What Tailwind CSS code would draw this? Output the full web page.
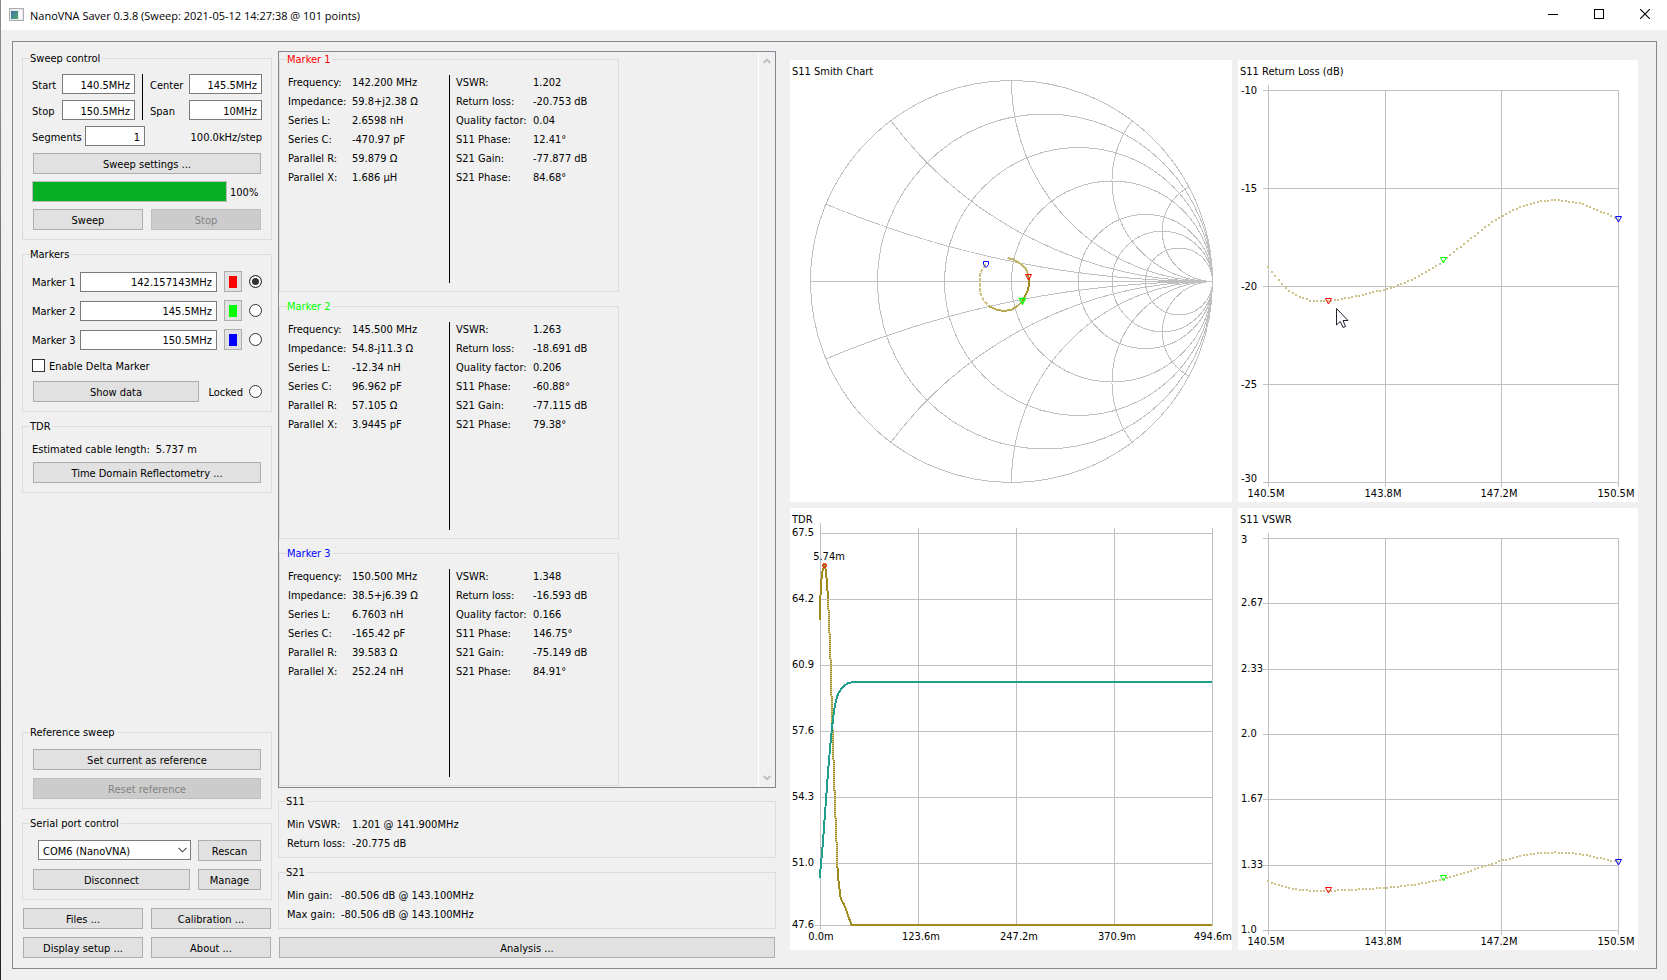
<!DOCTYPE html>
<html lang="en">
<head>
<meta charset="utf-8">
<title>NanoVNA Saver 0.3.8</title>
<script src="https://cdn.jsdelivr.net/npm/@tailwindcss/browser@4"></script>
</head>
<body class="flex min-h-screen bg-[#f0f0f0] font-['DejaVu_Sans_Condensed','DejaVu_Sans',sans-serif] text-[11px] leading-[15px] text-black">
<div class="w-px shrink-0 bg-linear-to-b from-[#8a8a8a] from-10% via-[#555555] to-[#222228]"></div>
<div class="flex min-w-0 flex-1 flex-col">

<header class="flex h-[30px] shrink-0 items-center gap-0.5 bg-white pl-2 font-['Open_Sans','Noto_Sans',sans-serif] text-[11px]">
  <svg class="mb-0.5 h-[13px] w-[15px]" viewBox="0 0 15 13" aria-hidden="true">
    <defs><linearGradient id="g" x1="0" y1="0" x2="1" y2="1"><stop offset="0" stop-color="#3f6fa8"/><stop offset="1" stop-color="#4fae6a"/></linearGradient></defs>
    <rect x="0.5" y="0.5" width="14" height="12" fill="#e8eaec" stroke="#a9adb2"/>
    <rect x="2" y="3" width="7" height="8" fill="url(#g)"/>
    <rect x="10" y="3" width="3" height="8" fill="#fafafa"/>
  </svg>
  <h1 class="ml-1 flex-1 whitespace-nowrap">NanoVNA Saver 0.3.8 (Sweep: 2021-05-12 14:27:38 @ 101 points)</h1>
  <button class="flex h-full w-11 items-center justify-center" aria-label="Minimize"><svg class="size-[10px]" viewBox="0 0 10 10"><path d="M0 4.5H10" stroke="#000"/></svg></button>
  <button class="flex h-full w-11 items-center justify-center" aria-label="Maximize"><svg class="mb-0.5 size-[10px]" viewBox="0 0 10 10"><rect x="0.5" y="0.5" width="9" height="9" fill="none" stroke="#000"/></svg></button>
  <button class="flex h-full w-11 items-center justify-center" aria-label="Close"><svg class="mb-0.5 size-[10px]" viewBox="0 0 10 10"><path d="M0 0L10 10M10 0L0 10" stroke="#000" stroke-width="1.1"/></svg></button>
</header>

<main class="mt-[11px] mr-[10px] mb-[11px] ml-[11px] flex flex-1 border border-[#828790]">

  <!-- Sweep and device controls -->
  <section class="flex w-[259px] shrink-0 flex-col gap-[7px] py-[9px] pl-[9px]">
    <fieldset class="min-w-0 border border-[#dcdcdc] px-[9px] pb-2">
      <legend class="-ml-0.5 h-[14px] pr-0.5">Sweep control</legend>
      <div class="flex flex-col gap-1.5 pt-[9px]">
        <div class="flex">
          <div class="flex w-[103px] flex-col gap-1.5">
            <div class="flex items-center justify-between"><label for="start" class="pt-0.5">Start</label><input id="start" value="140.5MHz" class="h-5 w-[73px] border border-[#7a7a7a] bg-white px-1 pt-0.5 text-right"></div>
            <div class="flex items-center justify-between"><label for="stop" class="pt-0.5">Stop</label><input id="stop" value="150.5MHz" class="h-5 w-[73px] border border-[#7a7a7a] bg-white px-1 pt-0.5 text-right"></div>
          </div>
          <div class="mx-[7px] w-px bg-black"></div>
          <div class="flex flex-1 flex-col gap-1.5">
            <div class="flex items-center justify-between"><label for="center" class="pt-0.5">Center</label><input id="center" value="145.5MHz" class="h-5 w-[73px] border border-[#7a7a7a] bg-white px-1 pt-0.5 text-right"></div>
            <div class="flex items-center justify-between"><label for="span" class="pt-0.5">Span</label><input id="span" value="10MHz" class="h-5 w-[73px] border border-[#7a7a7a] bg-white px-1 pt-0.5 text-right"></div>
          </div>
        </div>
        <div class="flex items-center"><label for="seg" class="w-[53px] pt-0.5">Segments</label><input id="seg" value="1" class="h-5 w-[60px] border border-[#7a7a7a] bg-white px-1 pt-0.5 text-right"><span class="ml-auto pt-0.5">100.0kHz/step</span></div>
        <button class="m-px h-[21px] border border-[#adadad] bg-[#e1e1e1] pt-0.5">Sweep settings ...</button>
        <div class="flex h-[21px] items-center gap-[3px]"><div class="h-[21px] w-[195px] border border-[#bcbcbc] bg-[#e6e6e6]" role="progressbar" aria-valuenow="100" aria-label="Sweep progress"><div class="h-full bg-[#06b025]" style="width:100%"></div></div><span class="pt-0.5">100%</span></div>
        <div class="grid grid-cols-2 gap-2 p-px"><button class="h-[21px] border border-[#adadad] bg-[#e1e1e1] pt-0.5">Sweep</button><button disabled class="h-[21px] border border-[#bfbfbf] bg-[#cccccc] pt-0.5 text-[#838383]">Stop</button></div>
      </div>
    </fieldset>

    <fieldset class="min-w-0 border border-[#dcdcdc] px-[9px] pb-2">
      <legend class="-ml-0.5 h-[14px] pr-0.5">Markers</legend>
      <div class="flex flex-col gap-1.5 pt-[9px]">
        <div class="flex h-[23px] items-center"><label for="m1" class="w-12 pt-0.5">Marker 1</label><input id="m1" value="142.157143MHz" class="h-5 w-[137px] border border-[#7a7a7a] bg-white px-1 pt-0.5 text-right"><button aria-label="Marker 1 colour" class="mr-[7px] ml-[7px] flex h-[21px] w-[18px] items-center justify-center border border-[#adadad] bg-[#e1e1e1]"><span class="h-3 w-2 bg-[#ff0000]"></span></button><input type="radio" name="mk" checked aria-label="Select marker 1" class="size-[13px] appearance-none rounded-full border border-[#333333] bg-white checked:bg-[#333333] checked:shadow-[inset_0_0_0_2px_white]"></div>
        <div class="flex h-[23px] items-center"><label for="m2" class="w-12 pt-0.5">Marker 2</label><input id="m2" value="145.5MHz" class="h-5 w-[137px] border border-[#7a7a7a] bg-white px-1 pt-0.5 text-right"><button aria-label="Marker 2 colour" class="mr-[7px] ml-[7px] flex h-[21px] w-[18px] items-center justify-center border border-[#adadad] bg-[#e1e1e1]"><span class="h-3 w-2 bg-[#00ff00]"></span></button><input type="radio" name="mk" aria-label="Select marker 2" class="size-[13px] appearance-none rounded-full border border-[#333333] bg-white checked:bg-[#333333] checked:shadow-[inset_0_0_0_2px_white]"></div>
        <div class="flex h-[23px] items-center"><label for="m3" class="w-12 pt-0.5">Marker 3</label><input id="m3" value="150.5MHz" class="h-5 w-[137px] border border-[#7a7a7a] bg-white px-1 pt-0.5 text-right"><button aria-label="Marker 3 colour" class="mr-[7px] ml-[7px] flex h-[21px] w-[18px] items-center justify-center border border-[#adadad] bg-[#e1e1e1]"><span class="h-3 w-2 bg-[#0000ff]"></span></button><input type="radio" name="mk" aria-label="Select marker 3" class="size-[13px] appearance-none rounded-full border border-[#333333] bg-white checked:bg-[#333333] checked:shadow-[inset_0_0_0_2px_white]"></div>
        <label class="flex h-[17px] items-center gap-1"><input type="checkbox" class="size-[13px] appearance-none border border-[#333333] bg-white checked:bg-[#333333]"><span class="pt-0.5">Enable Delta Marker</span></label>
        <div class="flex h-[23px] items-center pl-px"><button class="h-[21px] w-[166px] border border-[#adadad] bg-[#e1e1e1] pt-0.5">Show data</button><label for="locked" class="mr-1.5 ml-auto pt-0.5">Locked</label><input id="locked" type="radio" name="lock" class="size-[13px] appearance-none rounded-full border border-[#333333] bg-white checked:bg-[#333333]"></div>
      </div>
    </fieldset>

    <fieldset class="min-w-0 border border-[#dcdcdc] px-[9px] pb-2">
      <legend class="-ml-0.5 h-[14px] pr-0.5">TDR</legend>
      <div class="flex flex-col gap-1 pt-[9px]">
        <p class="flex gap-1.5"><span>Estimated cable length:</span><output>5.737 m</output></p>
        <button class="m-px h-[21px] border border-[#adadad] bg-[#e1e1e1] pt-0.5">Time Domain Reflectometry ...</button>
      </div>
    </fieldset>

    <fieldset class="mt-auto min-w-0 border border-[#dcdcdc] px-[9px] pb-2">
      <legend class="-ml-0.5 h-[14px] pr-0.5">Reference sweep</legend>
      <div class="flex flex-col gap-1.5 pt-[9px]">
        <button class="m-px h-[21px] border border-[#adadad] bg-[#e1e1e1] pt-0.5">Set current as reference</button>
        <button disabled class="m-px h-[21px] border border-[#bfbfbf] bg-[#cccccc] pt-0.5 text-[#838383]">Reset reference</button>
      </div>
    </fieldset>

    <fieldset class="min-w-0 border border-[#dcdcdc] px-[9px] pb-2">
      <legend class="-ml-0.5 h-[14px] pr-0.5">Serial port control</legend>
      <div class="flex flex-col gap-1.5 pt-[9px]">
        <div class="flex h-[23px] items-start justify-between p-px pl-1.5">
          <div class="grid">
            <select aria-label="Serial port" class="col-start-1 row-start-1 h-5 w-[153px] appearance-none border border-[#7a7a7a] bg-white pt-0.5 pl-1"><option>COM6 (NanoVNA)</option></select>
            <svg class="pointer-events-none col-start-1 row-start-1 mr-1 h-[6px] w-[9px] self-center justify-self-end" viewBox="0 0 9 6"><path d="M0.5 0.8L4.5 4.8L8.5 0.8" fill="none" stroke="#444" stroke-width="1.1"/></svg>
          </div>
          <button class="h-[21px] w-[63px] border border-[#adadad] bg-[#e1e1e1] pt-0.5">Rescan</button>
        </div>
        <div class="flex justify-between p-px"><button class="h-[21px] w-[157px] border border-[#adadad] bg-[#e1e1e1] pt-0.5">Disconnect</button><button class="h-[21px] w-[63px] border border-[#adadad] bg-[#e1e1e1] pt-0.5">Manage</button></div>
      </div>
    </fieldset>

    <div class="grid grid-cols-2 gap-2 p-px">
      <button class="h-[21px] border border-[#adadad] bg-[#e1e1e1] pt-0.5">Files ...</button>
      <button class="h-[21px] border border-[#adadad] bg-[#e1e1e1] pt-0.5">Calibration ...</button>
      <button class="h-[21px] border border-[#adadad] bg-[#e1e1e1] pt-0.5">Display setup ...</button>
      <button class="h-[21px] border border-[#adadad] bg-[#e1e1e1] pt-0.5">About ...</button>
    </div>
  </section>

  <!-- Marker readings -->
  <section class="ml-1.5 flex w-[498px] shrink-0 flex-col py-[9px]">
    <div class="flex flex-1 justify-between border border-[#828790]">
      <div class="flex w-[340px] flex-col gap-[7px] pb-px">
        <fieldset class="flex min-w-0 flex-1 border border-[#dcdcdc] px-2 pb-2">
          <legend class="-ml-px h-[14px] pr-0.5 text-[#ff0000]">Marker 1</legend>
          <dl class="mt-[9px] grid w-[161px] grid-cols-[64px_1fr] content-start gap-y-1 whitespace-nowrap"><dt>Frequency:</dt><dd>142.200 MHz</dd><dt>Impedance:</dt><dd>59.8+j2.38 Ω</dd><dt>Series L:</dt><dd>2.6598 nH</dd><dt>Series C:</dt><dd>-470.97 pF</dd><dt>Parallel R:</dt><dd>59.879 Ω</dd><dt>Parallel X:</dt><dd>1.686 µH</dd></dl>
          <div class="mt-[9px] w-px bg-black"></div>
          <dl class="mt-[9px] ml-1.5 grid grid-cols-[77px_1fr] content-start gap-y-1 whitespace-nowrap"><dt>VSWR:</dt><dd>1.202</dd><dt>Return loss:</dt><dd>-20.753 dB</dd><dt>Quality factor:</dt><dd>0.04</dd><dt>S11 Phase:</dt><dd>12.41°</dd><dt>S21 Gain:</dt><dd>-77.877 dB</dd><dt>S21 Phase:</dt><dd>84.68°</dd></dl>
        </fieldset>
        <fieldset class="flex min-w-0 flex-1 border border-[#dcdcdc] px-2 pb-2">
          <legend class="-ml-px h-[14px] pr-0.5 text-[#00ff00]">Marker 2</legend>
          <dl class="mt-[9px] grid w-[161px] grid-cols-[64px_1fr] content-start gap-y-1 whitespace-nowrap"><dt>Frequency:</dt><dd>145.500 MHz</dd><dt>Impedance:</dt><dd>54.8-j11.3 Ω</dd><dt>Series L:</dt><dd>-12.34 nH</dd><dt>Series C:</dt><dd>96.962 pF</dd><dt>Parallel R:</dt><dd>57.105 Ω</dd><dt>Parallel X:</dt><dd>3.9445 pF</dd></dl>
          <div class="mt-[9px] w-px bg-black"></div>
          <dl class="mt-[9px] ml-1.5 grid grid-cols-[77px_1fr] content-start gap-y-1 whitespace-nowrap"><dt>VSWR:</dt><dd>1.263</dd><dt>Return loss:</dt><dd>-18.691 dB</dd><dt>Quality factor:</dt><dd>0.206</dd><dt>S11 Phase:</dt><dd>-60.88°</dd><dt>S21 Gain:</dt><dd>-77.115 dB</dd><dt>S21 Phase:</dt><dd>79.38°</dd></dl>
        </fieldset>
        <fieldset class="flex min-w-0 flex-1 border border-[#dcdcdc] px-2 pb-2">
          <legend class="-ml-px h-[14px] pr-0.5 text-[#0000ff]">Marker 3</legend>
          <dl class="mt-[9px] grid w-[161px] grid-cols-[64px_1fr] content-start gap-y-1 whitespace-nowrap"><dt>Frequency:</dt><dd>150.500 MHz</dd><dt>Impedance:</dt><dd>38.5+j6.39 Ω</dd><dt>Series L:</dt><dd>6.7603 nH</dd><dt>Series C:</dt><dd>-165.42 pF</dd><dt>Parallel R:</dt><dd>39.583 Ω</dd><dt>Parallel X:</dt><dd>252.24 nH</dd></dl>
          <div class="mt-[9px] w-px bg-black"></div>
          <dl class="mt-[9px] ml-1.5 grid grid-cols-[77px_1fr] content-start gap-y-1 whitespace-nowrap"><dt>VSWR:</dt><dd>1.348</dd><dt>Return loss:</dt><dd>-16.593 dB</dd><dt>Quality factor:</dt><dd>0.166</dd><dt>S11 Phase:</dt><dd>146.75°</dd><dt>S21 Gain:</dt><dd>-75.149 dB</dd><dt>S21 Phase:</dt><dd>84.91°</dd></dl>
        </fieldset>
      </div>
      <div class="flex w-[17px] flex-col items-center justify-between border-l border-white py-1.5">
        <svg class="h-[6px] w-[8px]" viewBox="0 0 8 6"><path d="M0.7 5L4 1.7L7.3 5" fill="none" stroke="#bfbfbf" stroke-width="2"/></svg>
        <svg class="h-[6px] w-[8px]" viewBox="0 0 8 6"><path d="M0.7 1L4 4.3L7.3 1" fill="none" stroke="#bfbfbf" stroke-width="2"/></svg>
      </div>
    </div>
    <fieldset class="mt-1.5 min-w-0 border border-[#dcdcdc] px-2 pb-1.5">
      <legend class="-ml-px h-[14px] pr-0.5">S11</legend>
      <dl class="grid grid-cols-[65px_1fr] gap-y-1 pt-[9px]"><dt>Min VSWR:</dt><dd>1.201 @ 141.900MHz</dd><dt>Return loss:</dt><dd>-20.775 dB</dd></dl>
    </fieldset>
    <fieldset class="mt-[7px] min-w-0 border border-[#dcdcdc] px-2 pb-1.5">
      <legend class="-ml-px h-[14px] pr-0.5">S21</legend>
      <dl class="grid grid-cols-[54px_1fr] gap-y-1 pt-[9px]"><dt>Min gain:</dt><dd>-80.506 dB @ 143.100MHz</dd><dt>Max gain:</dt><dd>-80.506 dB @ 143.100MHz</dd></dl>
    </fieldset>
    <button class="mx-px mt-2 mb-px h-[21px] border border-[#adadad] bg-[#e1e1e1] pt-0.5">Analysis ...</button>
  </section>

  <!-- Charts -->
  <section class="grid min-w-0 flex-1 grid-cols-[442fr_400fr] gap-1.5 py-[18px] pr-[18px] pl-[14px]">
    <svg class="h-full w-full bg-white" viewBox="0 0 442 442" role="img" aria-label="S11 Smith Chart">
      <text x="2" y="15">S11 Smith Chart</text>
      <g fill="none" stroke="#c0c0c0" shape-rendering="crispEdges">
        <circle cx="221.5" cy="221.5" r="201"/>
        <circle cx="255" cy="221.5" r="167.5"/>
        <circle cx="288.5" cy="221.5" r="134"/>
        <circle cx="322" cy="221.5" r="100.5"/>
        <circle cx="355.5" cy="221.5" r="67"/>
        <circle cx="372.25" cy="221.5" r="50.25"/>
        <circle cx="389" cy="221.5" r="33.5"/>
        <path d="M20.5 221.5H422.5"/>
        <g id="react"></g>
      </g>
      <g fill="none" stroke-width="2" stroke-linejoin="round" shape-rendering="crispEdges">
        <path d="M195.500 204.500L192.500 209L189.500 215V231.500L193.500 240L198.500 246" stroke="#cdc38a" stroke-dasharray="4 1"/>
        <path d="M217.500 198L223.500 199.500L230 203.500L235.500 208.500L238 214" stroke="#c4b66b"/>
        <path d="M198.500 246L206 249.500L213 251L221 250L227.500 246L232.500 241" stroke="#b9a94e"/>
        <path d="M238 214L239 220V225.500L237.500 231L235 236L232.500 241" stroke="#a08c1e"/>
      </g>
      <path d="M193.500 201.500h5v3l-2.500 3l-2.500 -3z" fill="none" stroke="#0000ff"/>
      <path d="M235.500 214.500h6l-3 5.500z" fill="none" stroke="#ff0000"/>
      <path d="M229.500 238.500h6l-3 5.500z" fill="none" stroke="#00ff00" stroke-width="1.400"/>
    </svg>

    <svg class="h-full w-full bg-white" viewBox="0 0 400 442" role="img" aria-label="S11 Return Loss">
      <text x="2" y="15">S11 Return Loss (dB)</text>
      <path d="M25 30.500H381M25 128.500H381M25 226.500H381M25 324.500H381M25 422.500H381M30.500 25V427M147.500 30V427M263.500 30V427M380.500 30V427" stroke="#c0c0c0" shape-rendering="crispEdges"/>
      <text x="3" y="34">-10</text><text x="3" y="132">-15</text><text x="3" y="230">-20</text><text x="3" y="328">-25</text><text x="3" y="422">-30</text>
      <g text-anchor="middle"><text x="28" y="437">140.5M</text><text x="145" y="437">143.8M</text><text x="261" y="437">147.2M</text><text x="378" y="437">150.5M</text></g>
      <g id="rl" fill="#cdc38a" shape-rendering="crispEdges"></g>
      <g fill="none"><path d="M87.500 238.500h6l-3 5.500z" stroke="#ff0000"/><path d="M202.500 197.500h6l-3 5.500z" stroke="#00ff00"/><path d="M377.500 156.500h6l-3 5.500z" stroke="#0000ff"/></g>
      <path d="M98.500 248.500V265L102.300 261.500L105 267.500L107.500 266.500L105 260.500H110z" fill="#fff" stroke="#222233"/>
    </svg>

    <svg class="h-full w-full bg-white" viewBox="0 0 442 442" role="img" aria-label="TDR">
      <path d="M30 25.500H423M30 91.500H423M30 157.500H423M30 223.500H423M30 289.500H423M30 355.500H423M25 417.500H423M30.500 15V422M128.500 20V418M226.500 20V418M324.500 20V418M422.500 20V418" stroke="#c0c0c0" shape-rendering="crispEdges"/>
      <text x="2" y="15">TDR</text>
      <text x="2" y="28">67.5</text><text x="2" y="94">64.2</text><text x="2" y="160">60.9</text><text x="2" y="226">57.6</text><text x="2" y="292">54.3</text><text x="2" y="358">51.0</text><text x="2" y="420">47.6</text>
      <g text-anchor="middle"><text x="31" y="432">0.0m</text><text x="131" y="432">123.6m</text><text x="229" y="432">247.2m</text><text x="327" y="432">370.9m</text></g><text x="442" y="432" text-anchor="end">494.6m</text>
      <g fill="none" stroke-width="2" shape-rendering="crispEdges">
        <path id="imp" stroke="#a08c1e"/>
        <path id="impslope" stroke="#d3c98f" stroke-dasharray="1 1"/>
        <path id="step" stroke="#20a08c"/>
      </g>
      <circle cx="34.500" cy="57.500" r="2" fill="#a08c1e" stroke="#ff0000"/>
      <text x="39" y="52" text-anchor="middle">5.74m</text>
    </svg>

    <svg class="h-full w-full bg-white" viewBox="0 0 400 442" role="img" aria-label="S11 VSWR">
      <text x="2" y="15">S11 VSWR</text>
      <path d="M25 30.500H381M25 95.500H381M25 161.500H381M25 226.500H381M25 291.500H381M25 357.500H381M25 422.500H381M30.500 25V427M147.500 30V427M263.500 30V427M380.500 30V427" stroke="#c0c0c0" shape-rendering="crispEdges"/>
      <text x="3" y="35">3</text><text x="3" y="98">2.67</text><text x="3" y="164">2.33</text><text x="3" y="229">2.0</text><text x="3" y="294">1.67</text><text x="3" y="360">1.33</text><text x="3" y="425">1.0</text>
      <g text-anchor="middle"><text x="28" y="437">140.5M</text><text x="145" y="437">143.8M</text><text x="261" y="437">147.2M</text><text x="378" y="437">150.5M</text></g>
      <g id="vswr" fill="#cdc38a" shape-rendering="crispEdges"></g>
      <g fill="none"><path d="M87.500 379.500h6l-3 5.500z" stroke="#ff0000"/><path d="M202.500 367.500h6l-3 5.500z" stroke="#00ff00"/><path d="M377.500 351.500h6l-3 5.500z" stroke="#0000ff"/></g>
    </svg>
  </section>
</main>
</div>

<script>
const NS = 'http://www.w3.org/2000/svg';
const byId = id => document.getElementById(id);

// Constant-reactance arcs of the Smith chart, clipped at the unit circle.
const C = 221.5, R = 201;
for (const x of [0.2, 0.5, 1, 2, 4]) for (const s of [1, -1]) {
  const re = (x * x - 1) / (x * x + 1), im = 2 * x / (x * x + 1);
  const p = document.createElementNS(NS, 'path');
  p.setAttribute('d', `M${C + R} ${C}A${R / x} ${R / x} 0 0 ${s > 0 ? 1 : 0} ${C + R * re} ${C - s * R * im}`);
  byId('react').append(p);
}

// Return loss samples: sweep position 0..1050 and drop below -10 dB in 1/58.8 dB.
const rl = [[0,530],[20,556],[41,581],[62,601],[83,614],[105,623],[126,630],[147,632],[180,632],[210,627],[240,622],[270,616],[300,608],[330,602],[352,596],[380,588],[405,578],[435,567],[460,551],[490,536],[515,519],[545,493],[575,470],[605,447],[635,423],[660,404],[700,377],[725,365],[755,349],[785,340],[820,332],[860,329],[895,332],[935,338],[965,349],[990,360],[1020,372],[1050,387]];
const at = t => {
  let i = 1;
  while (i < rl.length - 1 && rl[i][0] < t) i++;
  const [a, b] = [rl[i - 1], rl[i]];
  return a[1] + (b[1] - a[1]) * (t - a[0]) / (b[0] - a[0]);
};
const dot = (g, x, y) => {
  const r = document.createElementNS(NS, 'rect');
  r.setAttribute('x', Math.round(x - 1)); r.setAttribute('y', Math.round(y - 1));
  r.setAttribute('width', 2); r.setAttribute('height', 2);
  g.append(r);
};
for (let i = 0; i <= 100; i++) {
  const v = at(i * 10.5), x = 30.4 + i * 3.5;
  dot(byId('rl'), x, 30.5 + v / 3);
  const g = Math.pow(10, -(10 + v / 58.8) / 20);
  dot(byId('vswr'), x, 422.5 - ((1 + g) / (1 - g) - 1) * 196);
}

// TDR traces, in thirds of a pixel.
const line = pts => 'M' + pts.map(([x, y]) => `${x / 3 - 10} ${y / 3 - 8}`).join('L');
const imp = [[120,360],[121,298],[123,250],[127,215],[131,203],[134,197],[137,210],[141,248],[144,298],[147,360],[150,435],[153,520],[155,608],[158,703],[161,795],[164,885],[167,965],[170,1037],[172,1097],[175,1140],[179,1172],[182,1195],[190,1210],[197,1225],[203,1243],[209,1260],[215,1274],[1296,1274]];
byId('imp').setAttribute('d', line(imp));
byId('impslope').setAttribute('d', line(imp.slice(8, 19)));
byId('step').setAttribute('d', line([[120,1135],[122,1098],[126,1060],[129,1022],[132,982],[135,940],[138,900],[141,858],[144,820],[147,780],[150,748],[153,712],[156,685],[159,657],[162,635],[165,615],[168,602],[172,588],[177,576],[185,565],[195,555],[205,549],[220,546],[1296,546]]));
</script>
</body>
</html>
